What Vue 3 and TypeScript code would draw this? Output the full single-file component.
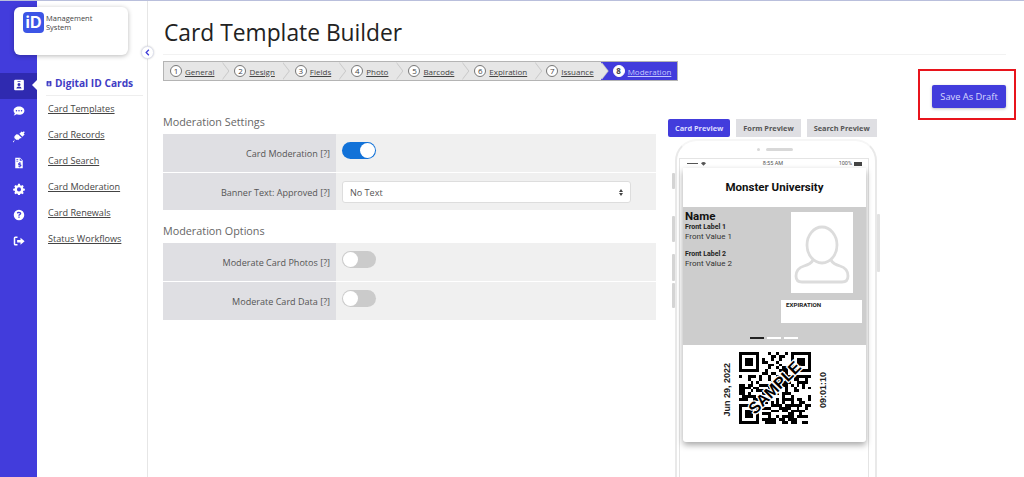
<script setup lang="ts">
const railIcons = [
  'M3 1h10a1.5 1.5 0 0 1 1.5 1.5v11a1.5 1.5 0 0 1-1.5 1.5H3a1.5 1.5 0 0 1-1.5-1.5v-11A1.5 1.5 0 0 1 3 1zM6 2.6v1h4v-1zM8 5.4a2 2 0 1 0 0 4 2 2 0 0 0 0-4zM4.6 12.8h6.8c0-1.8-1.5-2.7-3.4-2.7s-3.4.9-3.4 2.7z',
  'M8 2C3.9 2 .8 4.4.8 7.5c0 1.4.6 2.6 1.7 3.6-.3 1.1-1 2-1.7 2.8 1.5-.1 2.9-.7 3.9-1.5 1 .3 2.1.6 3.3.6 4.1 0 7.2-2.4 7.2-5.5S12.100 2 8 2zM4.600 6.500a1 1 0 1 1 0 2 1 1 0 0 1 0-2zm3.400 0a1 1 0 1 1 0 2 1 1 0 0 1 0-2zm3.400 0a1 1 0 1 1 0 2 1 1 0 0 1 0-2z',
  'M11.500 .5l1.300 1.300L14.500 .3l1.200 1.200-1.500 1.700 1.300 1.300-3 3-4-4zM7 4.500l4.500 4.500-1 1-.8-.8-3 3-1-1-.9.9-1.800-1.800L.8 15.200l-1-1 3.400-3.400L1.400 9l1-.9-.8-.8 3-3z',
  'M3 1h6.500L13 4.500V15H3zM9 1.800V5h3.200zM4.500 3v1H7V3zm0 2v1H7V5zM8.500 6.500v1c-1 .1-1.800.8-1.800 1.700 0 1.900 2.600 1.400 2.600 2.200 0 .4-.9.4-1.900 0l-.4 1.100c.4.200 1 .3 1.500.4v1h1.100v-1c1-.2 1.700-.8 1.700-1.700 0-1.900-2.600-1.500-2.600-2.200 0-.4.800-.4 1.800 0l.4-1.100c-.5-.2-.9-.3-1.300-.3v-1.100z',
  'M6.800 1h2.400l.4 2 1.300.6 1.700-1.100 1.700 1.700-1.100 1.700.6 1.300 2 .4v2.400l-2 .4-.6 1.300 1.100 1.700-1.700 1.700-1.700-1.100-1.300.6-.4 2H6.800l-.4-2-1.300-.6-1.700 1.100-1.700-1.700 1.100-1.700-.6-1.300-2-.4V7.600l2-.4.6-1.300-1.100-1.700 1.700-1.700 1.700 1.100 1.300-.6zM8 5.800a2.700 2.700 0 1 0 0 5.400 2.700 2.700 0 0 0 0-5.400z',
  'M8 1a7 7 0 1 0 0 14A7 7 0 0 0 8 1zm.900 10.800H7.100v-1.700h1.800zm1.700-4.700c-.3.500-.8.800-1.300 1.100-.4.300-.5.500-.5.900H7.100c0-1 .3-1.500 1-2 .5-.300 1-.6 1-1.100 0-.5-.5-.8-1.100-.8-.7 0-1.200.4-1.400 1l-1.500-.9C5.100 4.200 6.300 3.500 8 3.500c1.900 0 3 1 3 2.300 0 .5-.1.900-.4 1.300z',
  'M6 2H3a2 2 0 0 0-2 2v8a2 2 0 0 0 2 2h3v-2H3V4h3zM10 3.500v3H5.500v3.500H10v3l5.500-4.750z'
]
const links = ['Card Templates', 'Card Records', 'Card Search', 'Card Moderation', 'Card Renewals', 'Status Workflows']
const steps = ['General', 'Design', 'Fields', 'Photo', 'Barcode', 'Expiration', 'Issuance', 'Moderation']

const N = 25
function qrPath(): string {
  let seed = 20220629
  const bit = (): boolean => {
    seed = (Math.imul(seed, 1103515245) + 12345) & 0x7fffffff
    return ((seed >> 16) & 3) < 2
  }
  const finder = (r: number, c: number, x: number, y: number): boolean | null => {
    const dx = c - x
    const dy = r - y
    if (dx < -1 || dy < -1 || dx > 7 || dy > 7) return null
    if (dx < 0 || dy < 0 || dx > 6 || dy > 6) return false
    if (dx === 0 || dy === 0 || dx === 6 || dy === 6) return true
    if (dx === 1 || dy === 1 || dx === 5 || dy === 5) return false
    return true
  }
  let d = ''
  for (let r = 0; r < N; r++) {
    for (let c = 0; c < N; c++) {
      const v = bit()
      const f = finder(r, c, 0, 0) ?? finder(r, c, 18, 0) ?? finder(r, c, 0, 18)
      const dark = f === null ? v : f
      if (dark) d += `M${c} ${r}h1v1h-1z`
    }
  }
  return d
}
const qr = qrPath()
</script>

<template>
  <div class="page">
    <nav class="rail">
      <div v-for="(d, i) in railIcons" :key="i" class="rail-item" :class="{ active: i === 0 }">
        <svg viewBox="0 0 16 16" class="rail-icon"><path :d="d" fill-rule="evenodd" /></svg>
      </div>
    </nav>

    <div class="logo">
      <div class="logo-mark">iD</div>
      <div class="logo-text">Management<br />System</div>
    </div>

    <aside class="side">
      <div class="side-title">
        <svg viewBox="0 0 16 16" class="side-icon"><path :d="railIcons[0]" fill-rule="evenodd" /></svg>
        <span>Digital ID Cards</span>
      </div>
      <a v-for="l in links" :key="l" class="side-link">{{ l }}</a>
      <button class="collapse">
        <svg viewBox="0 0 10 10"><path d="M6.500 2 3.500 5l3 3" fill="none" stroke="#3f3cd8" stroke-width="1.400" /></svg>
      </button>
    </aside>

    <main class="main">
      <h1 class="title">Card Template Builder</h1>
      <div class="steps">
        <div v-for="(s, i) in steps" :key="s" class="step" :class="{ current: i === 7 }">
          <span class="num">{{ i + 1 }}</span>
          <a class="step-label">{{ s }}</a>
        </div>
      </div>

      <div class="body">
        <section class="form">
          <h2 class="heading">Moderation Settings</h2>
          <div class="row">
            <div class="label">Card Moderation [?]</div>
            <div class="field"><span class="toggle on"></span></div>
          </div>
          <div class="row short">
            <div class="label">Banner Text: Approved [?]</div>
            <div class="field">
              <div class="select">
                <span>No Text</span>
                <span class="carets"></span>
              </div>
            </div>
          </div>
          <h2 class="heading second">Moderation Options</h2>
          <div class="row">
            <div class="label">Moderate Card Photos [?]</div>
            <div class="field"><span class="toggle"></span></div>
          </div>
          <div class="row">
            <div class="label">Moderate Card Data [?]</div>
            <div class="field"><span class="toggle"></span></div>
          </div>
        </section>

        <section class="preview">
          <div class="tabs">
            <span class="tab tab-active">Card Preview</span>
            <span class="tab">Form Preview</span>
            <span class="tab">Search Preview</span>
          </div>
          <div class="phone">
            <i class="btn b1"></i><i class="btn b2"></i><i class="btn b3"></i><i class="btn b5"></i><i class="btn b4"></i>
            <div class="speaker"><i class="dot"></i><i class="bar"></i></div>
            <div class="screen">
              <div class="status">
                <span class="signal"><i class="dots"></i><svg viewBox="0 0 10 8" class="wifi"><path d="M5 7.500 1 3.500a5.700 5.700 0 0 1 8 0z" fill="#555" /></svg></span>
                <span>8:55 AM</span>
                <span class="batt-wrap">100% <i class="batt"></i></span>
              </div>
              <div class="card">
                <div class="card-head">Monster University</div>
                <div class="card-front">
                  <div class="card-fields">
                    <div class="name">Name</div>
                    <div class="f-label">Front Label 1</div>
                    <div class="f-value">Front Value 1</div>
                    <div class="f-label gap">Front Label 2</div>
                    <div class="f-value">Front Value 2</div>
                  </div>
                  <div class="card-right">
                    <div class="photo">
                      <svg viewBox="0 0 62 81" class="avatar">
                        <ellipse cx="31" cy="33" rx="15" ry="18" fill="none" stroke="#dcdcdc" stroke-width="2.800" />
                        <path d="M22 48c-2 4-5 5-9 6-5 1.500-8 5-8 10 0 4 2 6 6 6h40c4 0 6-2 6-6 0-5-3-8.500-8-10-4-1-7-2-9-6" fill="none" stroke="#dcdcdc" stroke-width="2.800" />
                      </svg>
                    </div>
                    <div class="expiration">EXPIRATION</div>
                  </div>
                  <div class="pager"><i class="pg cur"></i><i class="pg"></i><i class="pg"></i></div>
                </div>
                <div class="card-back">
                  <span class="vert">Jun 29, 2022</span>
                  <div class="qr">
                    <svg :viewBox="`0 0 ${N} ${N}`" shape-rendering="crispEdges"><path :d="qr" fill="#000" /></svg>
                    <span class="sample">SAMPLE</span>
                  </div>
                  <span class="vert">09:01:10</span>
                </div>
              </div>
            </div>
          </div>
        </section>

        <div class="actions">
          <button class="save">Save As Draft</button>
          <span class="callout"></span>
        </div>
      </div>
    </main>
  </div>
</template>

<style>
html, body { margin: 0; overflow: hidden; background: #fff; }
</style>

<style scoped>
.page {
  position: relative;
  display: flex;
  width: 1024px;
  height: 477px;
  overflow: hidden;
  border-top: 1px solid #b9bfdc;
  box-sizing: border-box;
  font-family: "Open Sans", "Noto Sans", sans-serif;
  color: #555;
  background: #fff;
}
.rail {
  flex: 0 0 37px;
  background: #423cdc;
  padding-top: 72px;
  box-sizing: border-box;
}
.rail-item {
  position: relative;
  height: 26px;
  padding-bottom: 2px;
  box-sizing: border-box;
  display: flex;
  align-items: center;
  justify-content: center;
}
.rail-item.active { background: #2f2ab0; }
.rail-item.active::after {
  content: "";
  position: absolute;
  right: 0;
  top: 7px;
  border: 5px solid transparent;
  border-right-color: #fff;
  border-left-width: 0;
}
.rail-icon { width: 12px; height: 12px; fill: #fff; }
.logo {
  position: absolute;
  left: 14px;
  top: 6px;
  width: 114px;
  height: 48px;
  background: #fff;
  border-radius: 6px;
  box-shadow: 0 1px 5px rgba(0, 0, 0, .28);
  display: flex;
  gap: 2px;
  padding: 5px 0 0 9px;
  box-sizing: border-box;
}
.logo-mark {
  width: 21px;
  height: 21px;
  background: #3c55e6;
  border-radius: 4px;
  color: #fff;
  font: 700 16px/21px "Inter", "Liberation Sans", sans-serif;
  text-align: center;
}
.logo-text { font-size: 7.500px; line-height: 9px; color: #444; padding-top: 2px; }
.side {
  position: relative;
  flex: 0 0 111px;
  border-right: 1px solid #e6e6e6;
  box-sizing: border-box;
  padding: 72px 4px 0 9px;
}
.side-title {
  display: flex;
  align-items: center;
  gap: 3px;
  font-size: 10.200px;
  line-height: 20px;
  font-weight: 700;
  color: #3f3cc4;
  padding-bottom: 2px;
  border-bottom: 1px solid #eee;
  white-space: nowrap;
}
.side-icon { width: 6px; height: 7px; fill: #3f3cc4; flex: none; }
.side-link {
  display: block;
  margin-left: 2px;
  height: 26px;
  font-size: 9.100px;
  line-height: 26px;
  color: #444;
  text-decoration: underline;
  white-space: nowrap;
}
.collapse {
  position: absolute;
  top: 45px;
  right: -7px;
  width: 13px;
  height: 13px;
  padding: 1px;
  border-radius: 50%;
  border: 1px solid #dfe1ee;
  background: #fff;
  box-shadow: 0 0 2px rgba(0,0,0,.2);
  box-sizing: border-box;
  z-index: 2;
}
.collapse svg { display: block; width: 9px; height: 9px; }
.main {
  flex: 1;
  min-width: 0;
  padding: 0 18px 0 15px;
  box-sizing: border-box;
}
.title {
  margin: 0;
  height: 54px;
  line-height: 64px;
  font-size: 22.800px;
  font-weight: 400;
  color: #222;
  border-bottom: 1px solid #f2f2f2;
  box-sizing: border-box;
  text-indent: 1px;
}
.steps {
  display: inline-flex;
  height: 20px;
  margin-top: 6px;
  border: 1px solid #b4b4b4;
  background: #e6e6e6;
  box-sizing: border-box;
  vertical-align: top;
}
.step {
  position: relative;
  display: flex;
  align-items: center;
  gap: 3px;
  padding: 0 7px 0 13px;
  font-size: 8px;
}
.step:first-child { padding-left: 6px; }
.step:nth-child(7) { padding-left: 12px; }
.step::before, .step::after {
  content: "";
  position: absolute;
  top: 0;
  bottom: 0;
  width: 7px;
  clip-path: polygon(0 0, 100% 50%, 0 100%);
  z-index: 1;
}
.step::before { left: 100%; background: #c8c8c8; margin-left: 1px; }
.step::after { left: 100%; background: #e6e6e6; }
.step:last-child::before, .step:last-child::after { display: none; }
.num {
  width: 12px;
  height: 12px;
  border-radius: 50%;
  border: 1px solid #777;
  background: #fff;
  font-size: 8px;
  text-align: center;
  color: #444;
  box-sizing: border-box;
  line-height: 10px;
}
.step-label { color: #444; text-decoration: underline; }
.step.current { background: #423cdc; padding: 0 6px 0 12px; }
.step.current .num { background: #fff; border-color: #fff; font-weight: 700; }
.step.current .step-label { color: #c5c8ff; }
.body { display: flex; align-items: flex-start; }
.form { flex: 0 0 493px; padding-top: 31px; }
.heading {
  margin: 0;
  font-size: 10.800px;
  line-height: 20px;
  font-weight: 400;
  color: #666;
  padding-bottom: 2px;
}
.heading.second { margin-top: 10px; }
.row {
  display: flex;
  height: 39px;
  border-bottom: 1px solid #fff;
  box-sizing: border-box;
  background: #f0f0f0;
}
.row.short { height: 38px; }
.label {
  flex: 0 0 173px;
  background: #dfdfe3;
  font-size: 9.050px;
  line-height: 40px;
  text-align: right;
  padding-right: 6px;
  box-sizing: border-box;
  color: #555;
  white-space: nowrap;
}
.field { flex: 1; padding: 8px 25px 0 6px; }
.toggle {
  position: relative;
  display: block;
  width: 34px;
  height: 17px;
  border-radius: 9px;
  background: #cbcbcb;
}
.toggle::after {
  content: "";
  position: absolute;
  left: 1px;
  top: 1px;
  width: 15px;
  height: 15px;
  border-radius: 50%;
  background: #fff;
}
.toggle.on { background: #1272d8; }
.toggle.on::after { left: 18px; }
.select {
  display: flex;
  align-items: center;
  justify-content: space-between;
  height: 22px;
  background: #fff;
  border: 1px solid #ddd;
  border-radius: 3px;
  padding: 0 7px 0 7px;
  box-sizing: border-box;
  font-size: 9.050px;
  color: #555;
}
.carets {
  display: flex;
  flex-direction: column;
  gap: 1px;
}
.carets::before, .carets::after {
  content: "";
  display: block;
  width: 0;
  height: 0;
  border-left: 2.500px solid transparent;
  border-right: 2.500px solid transparent;
}
.carets::before { border-bottom: 3px solid #444; }
.carets::after { border-top: 3px solid #444; }
.preview { flex: 0 0 209px; margin-left: 12px; padding-top: 38px; }
.tabs { display: flex; gap: 6px; height: 18px; }
.tab {
  display: block;
  background: #dfdfe3;
  font-size: 7.350px;
  font-weight: 700;
  line-height: 18px;
  padding: 0 7px;
  white-space: nowrap;
  color: #555;
}
.tab-active { background: #423cdc; color: #dcdcff; border-radius: 2px; }
.phone {
  position: relative;
  margin: 2px 0 0 7px;
  width: 202px;
  height: 400px;
  border: 2px solid #e9e9e9;
  border-top-color: #f6f6f6;
  border-radius: 22px 22px 0 0;
  box-sizing: border-box;
  background: #fff;
}
.btn { position: absolute; width: 3px; background: #d4d4d4; border-radius: 1px; }
.b1 { left: -5px; top: 32px; height: 16px; }
.b2 { left: -5px; top: 75px; height: 26px; }
.b3 { left: -5px; top: 113px; height: 27px; }
.b5 { left: -5px; top: 142px; height: 25px; }
.b4 { right: -5px; top: 73px; height: 58px; background: #e2e2e2; }
.speaker { display: flex; align-items: center; justify-content: center; gap: 6px; height: 17px; margin-right: 2px; }
.dot { width: 3px; height: 3px; border-radius: 50%; background: #d8d8d8; }
.bar { width: 27px; height: 3px; border-radius: 2px; background: #d8d8d8; }
.screen {
  margin: 0 6px 0 2px;
  border: 1px solid #e4e4e4;
  border-bottom: 0;
  padding: 0 2px 0 3px;
  height: 400px;
}
.status {
  display: flex;
  justify-content: space-between;
  align-items: center;
  height: 9px;
  padding: 0 4px;
  font: 5.500px/9px "Roboto", sans-serif;
  color: #555;
}
.signal, .batt-wrap { display: flex; align-items: center; gap: 2px; }
.dots { width: 11px; height: 1.500px; background: #555; }
.wifi { width: 7px; height: 5px; }
.batt { width: 8px; height: 4px; background: #444; }
.card {
  box-shadow: 0 3px 6px rgba(0,0,0,.35);
  border-radius: 0 0 3px 3px;
  background: #fff;
  font-family: "Roboto", sans-serif;
  color: #222;
}
.card-head {
  height: 39px;
  line-height: 38px;
  text-align: center;
  font-size: 11.500px;
  font-weight: 700;
  color: #111;
}
.card-front {
  position: relative;
  display: flex;
  justify-content: space-between;
  height: 138px;
  background: #cdcdcd;
  box-sizing: border-box;
  padding: 2px 4px 0 2px;
}
.name { font-size: 11.500px; line-height: 12px; font-weight: 700; color: #111; margin-top: 1px; }
.f-label { font-size: 7px; line-height: 9px; font-weight: 700; color: #222; margin-top: 1px; }
.f-label.gap { margin-top: 8px; }
.f-value { font-size: 8px; line-height: 10px; color: #333; }
.card-right { display: flex; flex-direction: column; align-items: flex-end; width: 81px; padding-top: 3px; }
.photo { width: 62px; height: 81px; background: #fff; margin-right: 9px; }
.avatar { display: block; width: 62px; height: 81px; }
.expiration {
  width: 81px;
  height: 23px;
  margin-top: 7px;
  background: #fff;
  box-sizing: border-box;
  padding-left: 5px;
  font-size: 6.200px;
  line-height: 11px;
  font-weight: 700;
  color: #222;
}
.pager { position: absolute; left: 67px; bottom: 6px; display: flex; gap: 3px; }
.pg { width: 14px; height: 2px; background: #fff; }
.pg.cur { background: #222; }
.card-back {
  display: flex;
  align-items: flex-start;
  justify-content: center;
  gap: 7px;
  height: 97px;
  box-sizing: border-box;
  padding-top: 7px;
}
.vert {
  align-self: center;
  margin-top: -14px;
  writing-mode: vertical-rl;
  transform: rotate(180deg);
  font: 700 9px/10px "Liberation Sans", sans-serif;
  color: #222;
  white-space: nowrap;
}
.qr { position: relative; width: 72px; height: 72px; }
.qr svg { display: block; width: 72px; height: 72px; }
.sample {
  position: absolute;
  left: 50%;
  top: 50%;
  transform: translate(-50%, -50%) rotate(-45deg);
  font: 700 16px/18px "Liberation Sans", sans-serif;
  color: #000;
  -webkit-text-stroke: 2.500px #fff;
  paint-order: stroke fill;
}
.actions {
  position: relative;
  flex: 1;
  display: flex;
  justify-content: flex-end;
  padding-top: 4px;
}
.save {
  height: 23px;
  width: 74px;
  padding: 0;
  border: 0;
  border-radius: 2px;
  background: #423cdc;
  color: #d8d8ff;
  font-family: inherit;
  font-size: 9.300px;
  box-shadow: 0 1px 3px rgba(0,0,0,.25);
}
.callout {
  position: absolute;
  right: -10px;
  top: -12px;
  width: 98px;
  height: 51px;
  border: 2px solid #e8141c;
  box-sizing: border-box;
}
</style>
